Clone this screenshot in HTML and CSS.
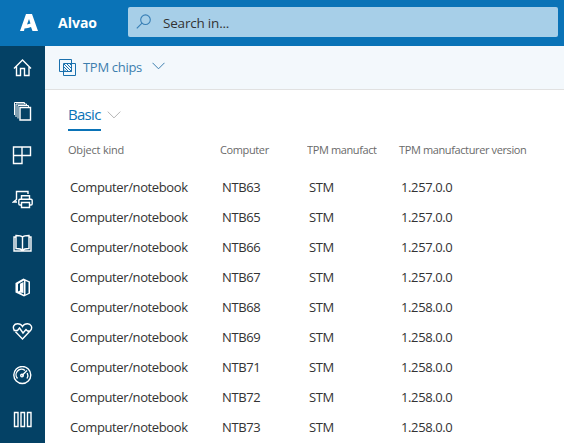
FILE: index.html
```html
<!DOCTYPE html>
<html lang="en">
<head>
<meta charset="utf-8">
<title>Alvao</title>
<link rel="stylesheet" href="styles.css">
</head>
<body>
<header class="topbar">
  <svg class="logo" width="18" height="18" viewBox="0 0 18 18"><path fill="#fff" fill-rule="evenodd" d="M6 0h6l6 17h-5.500l-1.500-4-3 1-3.500.500L4 17H0zM9 5L7 10.500l3.500-1z"/></svg>
  <span class="brand">Alvao</span>
  <div class="search">
    <svg width="16" height="16" viewBox="0 0 16 16" fill="none" stroke="#387fb5" stroke-width="1.100"><circle cx="9.500" cy="5.700" r="4.800"/><path d="M6 9.200L.8 14.400"/></svg>
    <span>Search in...</span>
  </div>
</header>
<div class="layout">
  <nav class="sidebar">
    <a><svg class="ico" viewBox="0 0 21 20"><path d="M2 10.500L10.500 2l8.500 8.500M4.500 8.500v9h4V10.500h4v7h4.500v-9"/></svg></a>
    <a><svg class="ico" viewBox="0 0 21 20"><path d="M8 5.500h10.500V18H8z"/><path class="thin" d="M6 16.500V3.500h10.500v2M4 15V2h10.500v1.500M2.500 13V.5h10V2"/></svg></a>
    <a><svg class="ico" viewBox="0 0 21 20"><path d="M1.500 1h17v8.500h-17zM1.500 9.500v8H10V1"/></svg></a>
    <a><svg class="ico" viewBox="0 0 21 20"><path d="M16 4V1.500H4.500v8L1.500 12H5M9.500 9V5.800h8V9M9.500 15H8q-1.200 0-1.200-1.200v-3.300Q6.800 9.200 8 9.200h11q1.200 0 1.200 1.300v3.300q0 1.200-1.200 1.200h-1.500M9.500 12.500h8v5h-8z"/></svg></a>
    <a><svg class="ico" viewBox="0 0 21 20"><path d="M10.500 3C9 1.500 7 1.500 4 1.500v13c3 0 5 0 6.500 2 1.500-2 3.500-2 6.500-2v-13c-3 0-5 0-6.500 1.500v13.500M4 3H2v14h17V3h-2"/></svg></a>
    <a><svg class="ico" viewBox="0 0 21 20"><path fill="#fff" stroke="none" fill-rule="evenodd" d="M3.500 5L11.500.5l6.500 3v12L12 18.500 3.500 14.500zM6 6v7.500l2-1V5.700L11.500 4v11l-3.500-.6 4 2.300V2.500zM13.500 3v13.500l3-1.500V4.300z"/></svg></a>
    <a><svg class="ico" viewBox="0 0 21 20"><path d="M2.500 8.500C0 5 2 1.800 5.500 1.800c2.500 0 4 1 5 2.700 1-1.700 2.500-2.700 5-2.700C19 1.800 21 5.500 18.500 8.500L10.500 17l-7-7.200M1.500 8.500h4l2-2.500 3.500 5 3-3.500 1.500 1.500h3"/></svg></a>
    <a><svg class="ico" viewBox="0 0 21 20"><circle cx="10.300" cy="9" r="8.500"/><path d="M5.500 12.500a5.500 5.500 0 0 1 7.500-8M15.200 7a5.500 5.500 0 0 1-.2 5.500M10 9.500l5-5"/><circle cx="10" cy="9.600" r="1.300"/></svg></a>
    <a><svg class="ico" viewBox="0 0 21 20"><path d="M2.500 2.500h3.500v14H2.500zM9 2.500h3.500v14H9zM15.500 2.500H19v14h-3.500z"/></svg></a>
  </nav>
  <main class="content">
    <div class="toolbar">
      <svg width="18" height="18" viewBox="0 0 18 18" fill="none" stroke="#1a70ad"><path d="M.5.500h12v12H.5zM4.500 4.500h12v12h-12zM5 8l4.500 4.500M5 5l7.500 7.500M8 5l4.500 4.500M5 10.500l2 2M11 5l1.500 1.500"/></svg>
      <span class="title">TPM chips</span>
      <svg width="13" height="8" viewBox="0 0 13 8" fill="none" stroke="#3c7eae"><path d="M.5.800l6 6 6-6"/></svg>
    </div>
    <div class="tabs">
      <span class="tab">Basic</span>
      <svg width="14" height="8" viewBox="0 0 14 8" fill="none" stroke="#b5b5b5"><path d="M.7.600L7 6.900 13.300.6"/></svg>
    </div>
    <div class="grid head"><span class="h1">Object kind</span><span class="h2">Computer</span><span class="h3">TPM manufacturer</span><span class="h4">TPM manufacturer version</span></div>
    <div class="grid row"><span class="kind">Computer/notebook</span><span>NTB63</span><span>STM</span><span class="ver">1.257.0.0</span></div>
    <div class="grid row"><span class="kind">Computer/notebook</span><span>NTB65</span><span>STM</span><span class="ver">1.257.0.0</span></div>
    <div class="grid row"><span class="kind">Computer/notebook</span><span>NTB66</span><span>STM</span><span class="ver">1.257.0.0</span></div>
    <div class="grid row"><span class="kind">Computer/notebook</span><span>NTB67</span><span>STM</span><span class="ver">1.257.0.0</span></div>
    <div class="grid row"><span class="kind">Computer/notebook</span><span>NTB68</span><span>STM</span><span class="ver">1.258.0.0</span></div>
    <div class="grid row"><span class="kind">Computer/notebook</span><span>NTB69</span><span>STM</span><span class="ver">1.258.0.0</span></div>
    <div class="grid row"><span class="kind">Computer/notebook</span><span>NTB71</span><span>STM</span><span class="ver">1.258.0.0</span></div>
    <div class="grid row"><span class="kind">Computer/notebook</span><span>NTB72</span><span>STM</span><span class="ver">1.258.0.0</span></div>
    <div class="grid row"><span class="kind">Computer/notebook</span><span>NTB73</span><span>STM</span><span class="ver">1.258.0.0</span></div>
  </main>
</div>
</body>
</html>
```
FILE: styles.css
```css
* { box-sizing: border-box; }
body {
  margin: 0;
  height: 443px;
  overflow: hidden;
  background: #fff;
  color: #333;
  font-family: "Open Sans", "Noto Sans", sans-serif;
  font-size: 13px;
}
svg { display: block; flex: none; }
.topbar {
  display: flex;
  align-items: center;
  height: 46px;
  padding: 0 6px 2px 20px;
  background: #0a73b7;
}
.logo { margin-top: 1px; }
.brand {
  width: 70px;
  margin-left: 20px;
  color: #fff;
  font-size: 14px;
  font-weight: 700;
}
.search {
  display: flex;
  align-items: center;
  flex: 1;
  height: 30px;
  padding-left: 8px;
  border-radius: 2px;
  background: #a7cfe8;
  color: #333;
  font-size: 13.5px;
  letter-spacing: -0.2px;
}
.search span { margin-left: 11px; padding-top: 1px; }
.layout { display: flex; height: 397px; }
.sidebar { width: 45px; flex: none; background: #044165; overflow: hidden; }
.sidebar a { display: flex; align-items: center; height: 44px; padding-left: 12px; }
.ico {
  width: 21px;
  height: 20px;
  fill: none;
  stroke: #fff;
  stroke-width: 1.4;
}
.thin { stroke-width: 1; }
.content { flex: 1; min-width: 0; }
.toolbar {
  display: flex;
  align-items: center;
  height: 44px;
  padding-left: 14px;
  border-bottom: 1px solid #e1e1e1;
  background: #f3f8fc;
}
.title {
  width: 70px;
  margin: -2px 0 0 6px;
  color: #3c7eae;
  font-size: 13px;
  letter-spacing: -0.3px;
  white-space: nowrap;
}
.toolbar .title + svg { margin: -3px 0 0 -1px; }
.tabs { display: flex; align-items: flex-start; height: 51px; padding: 14px 0 0 23px; }
.tab {
  width: 33px;
  height: 27px;
  border-bottom: 2px solid #0a73b7;
  color: #0a73b7;
  font-size: 15px;
  letter-spacing: -0.7px;
  line-height: 20px;
  white-space: nowrap;
}
.tabs svg { margin: 7px 0 0 6px; }
.grid { display: grid; align-items: center; white-space: nowrap; }
.head {
  grid-template-columns: 152px 87px 70px 130px;
  height: 18px;
  margin-top: -1px;
  padding-left: 23px;
  color: #6a6a6a;
  font-size: 11px;
  letter-spacing: -0.38px;
}
.h1 { letter-spacing: -0.2px; }
.h3 { overflow: hidden; }
.h4 { margin-left: 22px; }
.row {
  grid-template-columns: 152px 87px 92px 130px;
  height: 30px;
  padding-left: 25px;
  letter-spacing: -0.38px;
}
.head + .row { margin-top: 14px; }
```
